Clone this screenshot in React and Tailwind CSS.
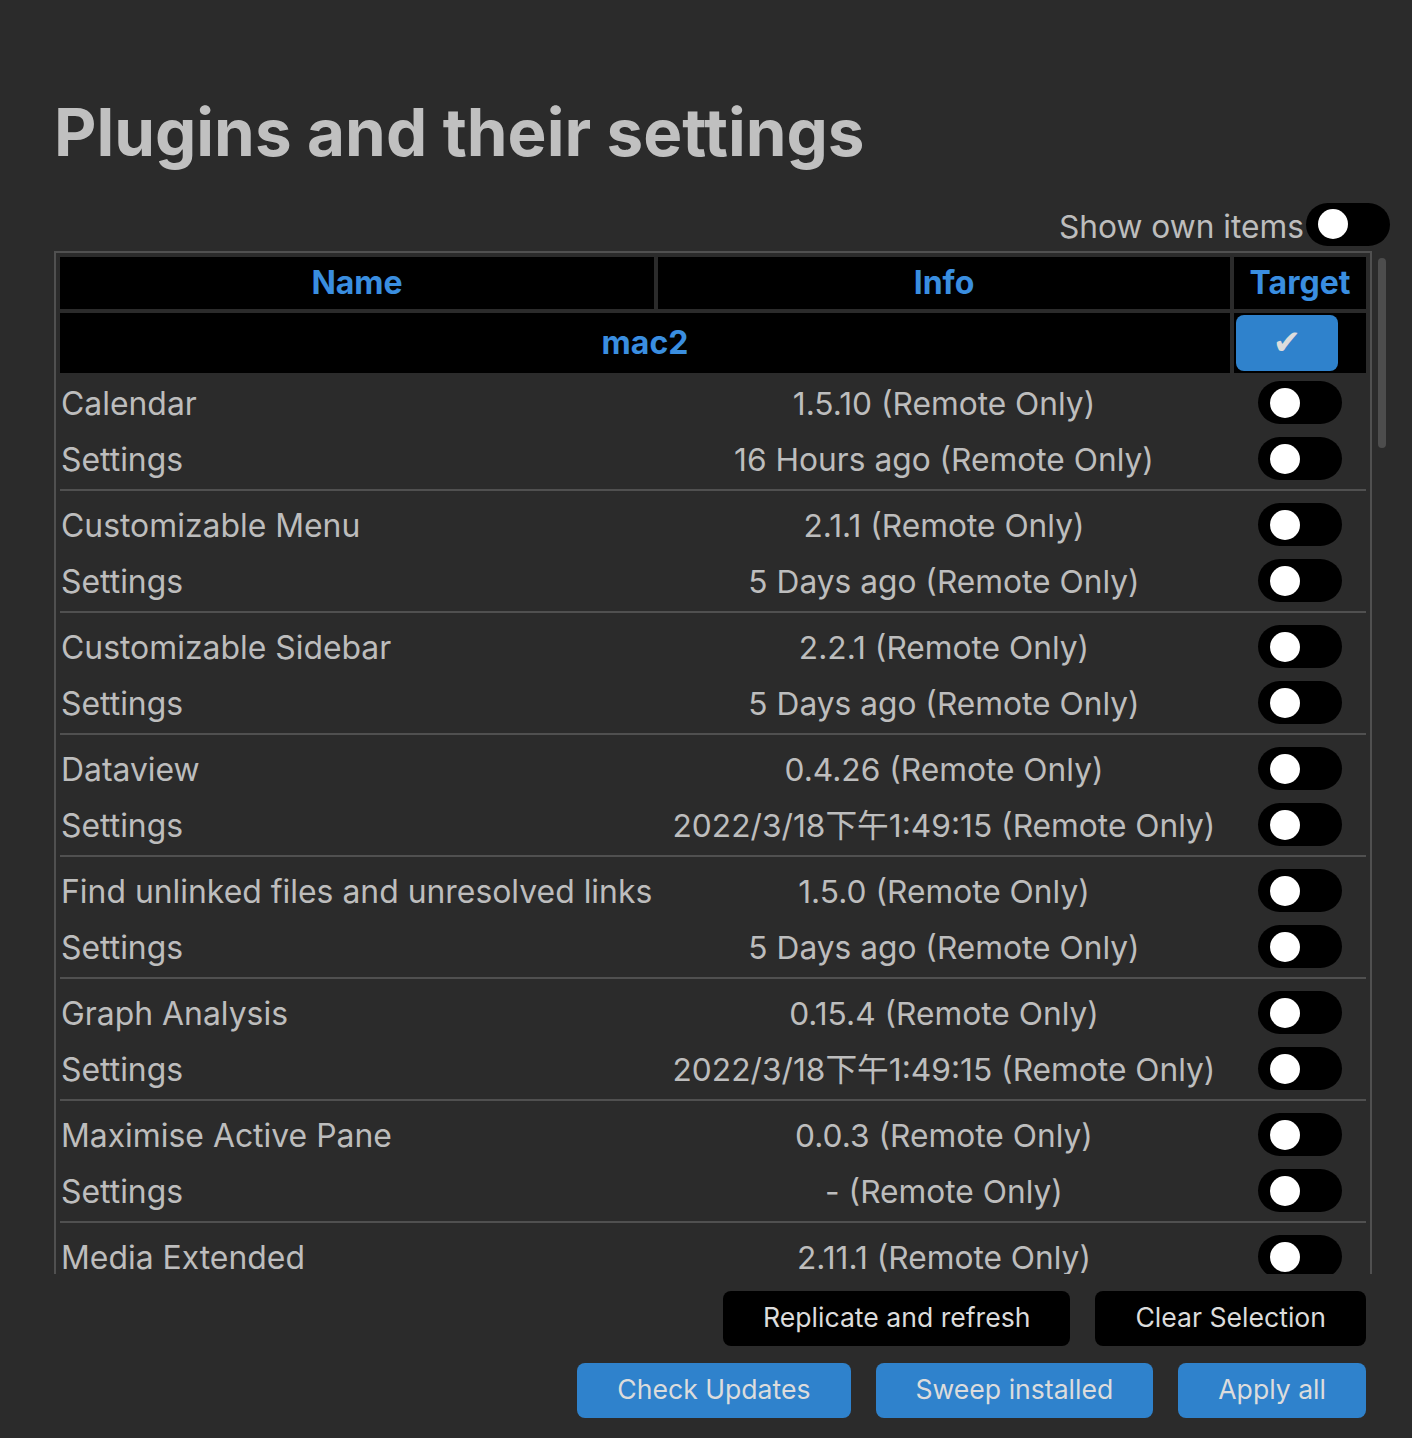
import React from "react";

const groups = [
  ["Calendar", "1.5.10 (Remote Only)", "16 Hours ago (Remote Only)"],
  ["Customizable Menu", "2.1.1 (Remote Only)", "5 Days ago (Remote Only)"],
  ["Customizable Sidebar", "2.2.1 (Remote Only)", "5 Days ago (Remote Only)"],
  ["Dataview", "0.4.26 (Remote Only)", "2022/3/18下午1:49:15 (Remote Only)"],
  ["Find unlinked files and unresolved links", "1.5.0 (Remote Only)", "5 Days ago (Remote Only)"],
  ["Graph Analysis", "0.15.4 (Remote Only)", "2022/3/18下午1:49:15 (Remote Only)"],
  ["Maximise Active Pane", "0.0.3 (Remote Only)", "- (Remote Only)"],
  ["Media Extended", "2.11.1 (Remote Only)", "5 Days ago (Remote Only)"],
];

function Toggle() {
  return (
    <div className="flex h-[43px] w-[84px] shrink-0 items-center rounded-full bg-black pl-[12px]">
      <div className="h-[30px] w-[30px] rounded-full bg-white" />
    </div>
  );
}

function Row({ name, info }) {
  return (
    <div className="grid h-[56px] grid-cols-[594px_572px_132px] items-center gap-x-[4px]">
      <div className="whitespace-nowrap pl-[1px] pt-[2px] text-[31.9px]">{name}</div>
      <div className="whitespace-nowrap pt-[2px] text-center">{info}</div>
      <div className="flex justify-center">
        <Toggle />
      </div>
    </div>
  );
}

export default function App() {
  return (
    <div
      className="min-h-screen w-full overflow-hidden bg-[#2b2b2b] text-[31.7px] text-[#bdbdbd]"
      style={{ fontFamily: "Inter, 'Noto Sans CJK SC', sans-serif" }}
    >
      <div className="pl-[54px] pt-[100px]">
        <h1 className="text-[65.5px] font-bold leading-none text-[#c0c0c0]">
          Plugins and their settings
        </h1>

        <div className="mt-[37px] flex w-[1336px] items-center justify-end">
          <span className="pt-[5px] leading-none">Show own items</span>
          <div className="ml-[2px]">
            <Toggle />
          </div>
        </div>

        <div className="mt-[5px] flex items-start">
          <div className="h-[1023px] w-[1318px] overflow-hidden border-x-2 border-t-2 border-[#505050] px-[4px] pt-[4px]">
            <div className="grid grid-cols-[594px_572px_132px] gap-[4px] text-[32px] font-bold text-[#3a8ee0]">
              <div className="flex h-[52px] items-center justify-center bg-black pt-[1px]">Name</div>
              <div className="flex h-[52px] items-center justify-center bg-black pt-[1px]">Info</div>
              <div className="flex h-[52px] items-center justify-center bg-black pt-[1px]">Target</div>
              <div className="col-span-2 flex h-[60px] items-center justify-center bg-black pt-[1px]">mac2</div>
              <div className="flex h-[60px] items-center bg-black pl-[2px]">
                <div
                  className="flex h-[56px] w-[102px] items-center justify-center rounded-[8px] bg-[#2f82cc] text-[34px] font-normal text-[#dcdcdc]"
                  style={{ fontFamily: "'DejaVu Sans', sans-serif" }}
                >
                  ✔
                </div>
              </div>
            </div>

            <div className="mt-[2px]">
              {groups.map(([name, ver, set]) => (
                <div key={name}>
                  <Row name={name} info={ver} />
                  <Row name="Settings" info={set} />
                  <div className="mb-[6px] mt-[2px] h-[2px] bg-[#505050]" />
                </div>
              ))}
            </div>
          </div>
          <div className="ml-[6px] mt-[7px] h-[190px] w-[8px] rounded-full bg-[#4d4d4d]" />
        </div>

        <div className="mt-[17px] flex w-[1312px] justify-end gap-[25px] text-[26.6px] text-[#dcdcdc]">
          <button className="h-[55px] whitespace-nowrap rounded-[8px] bg-black px-[40px]">Replicate and refresh</button>
          <button className="h-[55px] whitespace-nowrap rounded-[8px] bg-black px-[40px]">Clear Selection</button>
        </div>
        <div className="mt-[17px] flex w-[1312px] justify-end gap-[25px] text-[26.6px] text-[#dcdcdc]">
          <button className="h-[55px] whitespace-nowrap rounded-[8px] bg-[#2f82cc] px-[40px]">Check Updates</button>
          <button className="h-[55px] whitespace-nowrap rounded-[8px] bg-[#2f82cc] px-[40px]">Sweep installed</button>
          <button className="h-[55px] whitespace-nowrap rounded-[8px] bg-[#2f82cc] px-[40px]">Apply all</button>
        </div>
      </div>
    </div>
  );
}
